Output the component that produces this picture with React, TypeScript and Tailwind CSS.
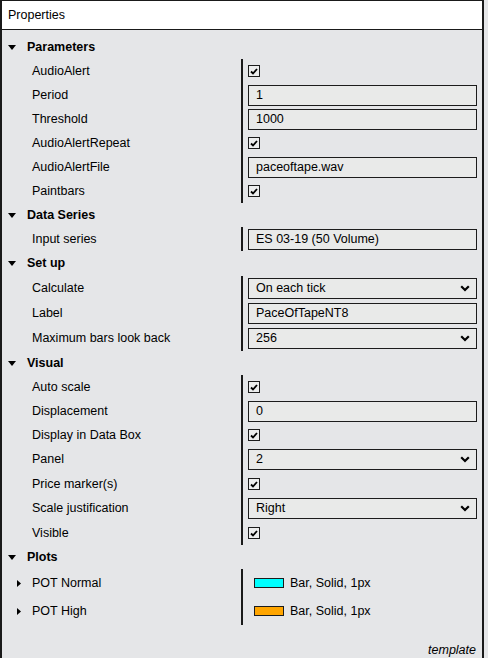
import React from 'react'

type Prop =
  | { name: string; kind: 'check'; h?: number }
  | { name: string; kind: 'text'; value: string; h?: number }
  | { name: string; kind: 'select'; value: string; h?: number }
  | { name: string; kind: 'plot'; color: string; h?: number }

const SECTIONS: { title: string; h?: number; props: Prop[] }[] = [
  {
    title: 'Parameters',
    props: [
      { name: 'AudioAlert', kind: 'check' },
      { name: 'Period', kind: 'text', value: '1' },
      { name: 'Threshold', kind: 'text', value: '1000' },
      { name: 'AudioAlertRepeat', kind: 'check' },
      { name: 'AudioAlertFile', kind: 'text', value: 'paceoftape.wav' },
      { name: 'Paintbars', kind: 'check' },
    ],
  },
  {
    title: 'Data Series',
    props: [{ name: 'Input series', kind: 'text', value: 'ES 03-19 (50 Volume)' }],
  },
  {
    title: 'Set up',
    h: 25,
    props: [
      { name: 'Calculate', kind: 'select', value: 'On each tick', h: 25 },
      { name: 'Label', kind: 'text', value: 'PaceOfTapeNT8', h: 25 },
      { name: 'Maximum bars look back', kind: 'select', value: '256', h: 25 },
    ],
  },
  {
    title: 'Visual',
    props: [
      { name: 'Auto scale', kind: 'check' },
      { name: 'Displacement', kind: 'text', value: '0' },
      { name: 'Display in Data Box', kind: 'check' },
      { name: 'Panel', kind: 'select', value: '2', h: 25 },
      { name: 'Price marker(s)', kind: 'check' },
      { name: 'Scale justification', kind: 'select', value: 'Right', h: 25 },
      { name: 'Visible', kind: 'check' },
    ],
  },
  {
    title: 'Plots',
    props: [
      { name: 'POT Normal', kind: 'plot', color: '#00ffff', h: 28 },
      { name: 'POT High', kind: 'plot', color: '#ffa500', h: 28 },
    ],
  },
]

function CheckBox() {
  return (
    <div className="w-[12px] h-[12px] border border-[#1c1c1c] bg-[#eceded] flex items-center justify-center">
      <svg width="8" height="7" viewBox="0 0 8 7">
        <path d="M1 3.5 L3 5.5 L7 1" fill="none" stroke="#000" strokeWidth="1.8" />
      </svg>
    </div>
  )
}

function Value({ p }: { p: Prop }) {
  if (p.kind === 'check') return <CheckBox />
  if (p.kind === 'plot')
    return (
      <div className="flex items-center gap-[6px] pl-[6px]">
        <div className="w-[30px] h-[10px] border border-[#1c1c1c]" style={{ background: p.color }} />
        <span>Bar, Solid, 1px</span>
      </div>
    )
  return (
    <div className="h-[21px] border border-[#1c1c1c] bg-[#e9eae9] flex items-center pl-[7px] pr-[6px]">
      <span className="flex-1">{p.value}</span>
      {p.kind === 'select' && (
        <svg width="10" height="7" viewBox="0 0 10 7">
          <path d="M1.2 1.2 L5 5 L8.8 1.2" fill="none" stroke="#000" strokeWidth="2.2" />
        </svg>
      )}
    </div>
  )
}

export default function App() {
  return (
    <div
      className="w-[488px] h-[658px] bg-[#e5e6e8] text-[12.5px] text-black overflow-hidden"
      style={{ fontFamily: '"Liberation Sans", Arial, sans-serif' }}
    >
      <div className="w-[484px] h-full border-t border-x-2 border-[#1a1a1a] flex flex-col">
        <div className="h-[29px] shrink-0 bg-white border-b border-[#1a1a1a] flex items-center pl-[6px]">
          Properties
        </div>
        <div className="pt-[5px] flex-1 flex flex-col">
          {SECTIONS.map((s) => (
            <div key={s.title}>
              <div className="flex items-center" style={{ height: s.h ?? 24 }}>
                <svg className="ml-[6px] mr-[11px]" width="8" height="5" viewBox="0 0 8 5">
                  <polygon points="0,0 8,0 4,5" fill="#000" />
                </svg>
                <span className="font-bold">{s.title}</span>
              </div>
              {s.props.map((p) => (
                <div key={p.name} className="flex" style={{ height: p.h ?? 24 }}>
                  <div className="w-[239px] flex items-center">
                    {p.kind === 'plot' ? (
                      <svg className="ml-[15px] mr-[11px]" width="4" height="7" viewBox="0 0 4 7">
                        <polygon points="0,0 4,3.5 0,7" fill="#000" />
                      </svg>
                    ) : (
                      <span className="w-[30px]" />
                    )}
                    <span>{p.name}</span>
                  </div>
                  <div className="w-[2px] bg-[#1a1a1a]" />
                  <div className="flex-1 flex flex-col justify-center pl-[5px] pr-[5px]">
                    <div>
                      <Value p={p} />
                    </div>
                  </div>
                </div>
              ))}
            </div>
          ))}
          <div className="flex-1 flex items-end justify-end pr-[6px] -mb-[2px] italic">template</div>
        </div>
      </div>
    </div>
  )
}
